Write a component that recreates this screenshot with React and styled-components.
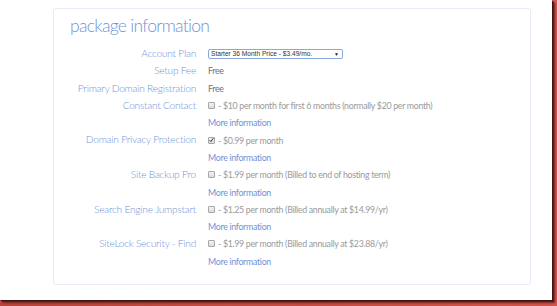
import React from "react";
import styled, { createGlobalStyle } from "styled-components";

const BLUE = "#6f93d6";
const GREY = "#9a9a9a";

const GlobalStyle = createGlobalStyle`
  html, body {
    margin: 0;
    padding: 0;
    background: #c44a40;
  }
  body {
    font-family: Lato, "Open Sans", sans-serif;
  }
`;

const Screen = styled.div({
  width: 557,
  height: 306,
  background: "linear-gradient(90deg, #b8443b, #d2564b)",
  overflow: "hidden",
});

const Sheet = styled.div({
  width: 552,
  height: 300,
  background: "#fff",
  boxShadow: "1px 1px 0 #3c1411, 2px 2px 1px #5a1e19, 3px 3px 2px #7c2a23",
  paddingTop: 8,
  paddingLeft: 53,
  boxSizing: "border-box",
});

const Card = styled.div({
  width: 478,
  height: 277,
  boxSizing: "border-box",
  border: "1px solid #e4ebf4",
  borderRadius: 3,
  padding: "6px 16px 0 16px",
});

const Title = styled.h2({
  margin: 0,
  fontSize: 17.5,
  lineHeight: "22px",
  fontWeight: 300,
  color: BLUE,
  letterSpacing: -0.7,
});

const Form = styled.div({
  marginTop: 8,
  display: "grid",
  gridTemplateColumns: "126px 1fr",
  columnGap: 12,
  alignItems: "start",
});

const Label = styled.div({
  textAlign: "right",
  fontSize: 10.2,
  fontWeight: 300,
  lineHeight: "17.3px",
  color: BLUE,
  letterSpacing: -0.25,
  whiteSpace: "nowrap",
});

const Value = styled.div({
  display: "flex",
  flexDirection: "column",
});

const Line = styled.div({
  display: "flex",
  alignItems: "center",
  height: 17.3,
  whiteSpace: "nowrap",
});

const Text = styled.span`
  font-size: 8.8px;
  font-weight: 400;
  letter-spacing: -0.3px;
  color: ${(p) => (p.$link ? BLUE : p.$dark ? "#707070" : GREY)};
`;

const Select = styled.div({
  width: 135,
  height: 10,
  boxSizing: "border-box",
  border: "1px solid #86a8dc",
  borderRadius: 2,
  display: "flex",
  alignItems: "center",
  justifyContent: "space-between",
  padding: "0 3px 0 2px",
  fontFamily: '"Liberation Sans", Arial, sans-serif',
  fontSize: 6.6,
  color: "#333",
  background: "#fff",
});

const Arrow = styled.span({
  fontSize: 5,
  color: "#222",
});

const Box = styled.span({
  width: 7,
  height: 7,
  boxSizing: "border-box",
  border: "1px solid #a6a6a6",
  borderRadius: 1,
  background: "linear-gradient(#f4f4f4, #dcdcdc)",
  marginRight: 3,
  display: "inline-flex",
  alignItems: "center",
  justifyContent: "center",
});

function Checkbox({ checked }) {
  return (
    <Box>
      {checked && (
        <svg width="6" height="6" viewBox="0 0 6 6">
          <path d="M0.8 3.2 L2.3 4.8 L5.3 0.8" stroke="#333" strokeWidth="1.2" fill="none" />
        </svg>
      )}
    </Box>
  );
}

const options = [
  {
    label: "Constant Contact",
    text: "- $10 per month for first 6 months (normally $20 per month)",
  },
  { label: "Domain Privacy Protection", text: "- $0.99 per month", checked: true },
  { label: "Site Backup Pro", text: "- $1.99 per month (Billed to end of hosting term)" },
  { label: "Search Engine Jumpstart", text: "- $1.25 per month (Billed annually at $14.99/yr)" },
  { label: "SiteLock Security - Find", text: "- $1.99 per month (Billed annually at $23.88/yr)" },
];

export default function App() {
  return (
    <Screen>
      <GlobalStyle />
      <Sheet>
        <Card>
          <Title>package information</Title>
          <Form>
            <Label>Account Plan</Label>
            <Value>
              <Line>
                <Select>
                  <span>Starter 36 Month Price - $3.49/mo.</span>
                  <Arrow>▼</Arrow>
                </Select>
              </Line>
            </Value>
            <Label>Setup Fee</Label>
            <Value>
              <Line>
                <Text $dark>Free</Text>
              </Line>
            </Value>
            <Label>Primary Domain Registration</Label>
            <Value>
              <Line>
                <Text $dark>Free</Text>
              </Line>
            </Value>
            {options.map((o) => (
              <React.Fragment key={o.label}>
                <Label>{o.label}</Label>
                <Value>
                  <Line>
                    <Checkbox checked={o.checked} />
                    <Text>{o.text}</Text>
                  </Line>
                  <Line>
                    <Text $link>More information</Text>
                  </Line>
                </Value>
              </React.Fragment>
            ))}
          </Form>
        </Card>
      </Sheet>
    </Screen>
  );
}
